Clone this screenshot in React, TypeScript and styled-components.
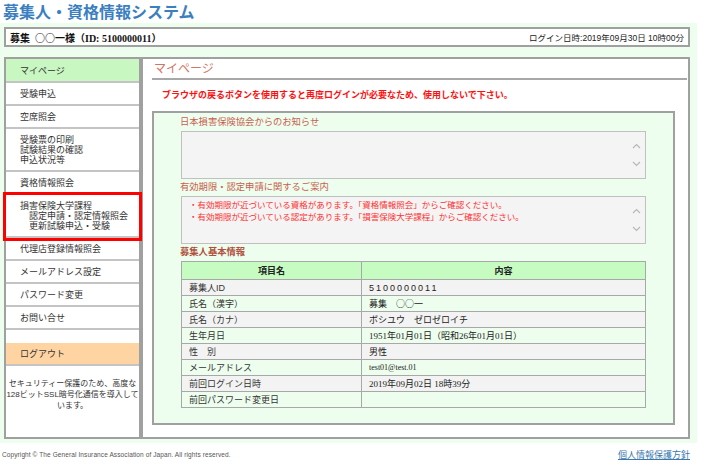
import styled, { createGlobalStyle } from 'styled-components';

const GlobalStyle = createGlobalStyle`
  body {
    margin: 0;
    background: #ffffff;
    font-family: "Liberation Sans", "Noto Sans CJK JP", sans-serif;
    color: #333333;
  }
`;

const MENU_ITEMS: { lines: string[]; active?: boolean; highlighted?: boolean }[] = [
  { lines: ['マイページ'], active: true },
  { lines: ['受験申込'] },
  { lines: ['空席照会'] },
  { lines: ['受験票の印刷', '試験結果の確認', '申込状況等'] },
  { lines: ['資格情報照会'] },
  { lines: ['損害保険大学課程', '\u3000認定申請・認定情報照会', '\u3000更新試験申込・受験'], highlighted: true },
  { lines: ['代理店登録情報照会'] },
  { lines: ['メールアドレス設定'] },
  { lines: ['パスワード変更'] },
  { lines: ['お問い合せ'] },
];

const NOTICES = [
  '・有効期限が近づいている資格があります。「資格情報照会」からご確認ください。',
  '・有効期限が近づいている認定があります。「損害保険大学課程」からご確認ください。',
];

// wide: part of the value drawn in the CJK font (full-width ○)
const PROFILE: { label: string; value: string; wide?: string; spaced?: boolean; small?: boolean }[] = [
  { label: '募集人ID', value: '5100000011', spaced: true },
  { label: '氏名（漢字）', value: '募集\u3000', wide: '○○一' },
  { label: '氏名（カナ）', value: 'ボシユウ\u3000ゼロゼロイチ' },
  { label: '生年月日', value: '1951年01月01日（昭和26年01月01日）' },
  { label: '性\u3000別', value: '男性' },
  { label: 'メールアドレス', value: 'test01@test.01', small: true },
  { label: '前回ログイン日時', value: '2019年09月02日 18時39分' },
  { label: '前回パスワード変更日', value: '' },
];

function ScrollArrows() {
  return (
    <ScrollColumn>
      <svg width="9" height="6" viewBox="0 0 9 6">
        <path d="M1 5 L4.5 1.5 L8 5" fill="none" stroke="#b8b8b8" strokeWidth="1.2" />
      </svg>
      <svg width="9" height="6" viewBox="0 0 9 6">
        <path d="M1 1 L4.5 4.5 L8 1" fill="none" stroke="#b8b8b8" strokeWidth="1.2" />
      </svg>
    </ScrollColumn>
  );
}

function App() {
  return (
    <Page>
      <GlobalStyle />
      <Title>募集人・資格情報システム</Title>
      <HeaderBand>
        <HeaderBox>
          <UserName>
            募集&nbsp;&nbsp;<Wide>○○一</Wide>様（ID: 5100000011）
          </UserName>
          <LoginTime>ログイン日時:2019年09月30日 10時00分</LoginTime>
        </HeaderBox>
      </HeaderBand>
      <MainBand>
        <Sidebar>
          {MENU_ITEMS.map((item) => (
            <MenuItem key={item.lines[0]} $active={item.active} $highlighted={item.highlighted}>
              {item.lines.map((line) => (
                <div key={line}>{line}</div>
              ))}
            </MenuItem>
          ))}
          <LogoutItem>ログアウト</LogoutItem>
          <SecurityNote>
            セキュリティー保護のため、高度な
            <br />
            128ビットSSL暗号化通信を導入して
            <br />
            います。
          </SecurityNote>
        </Sidebar>
        <Content>
          <PageTitle>マイページ</PageTitle>
          <Warning>ブラウザの戻るボタンを使用すると再度ログインが必要なため、使用しないで下さい。</Warning>
          <InfoPanel>
            <SectionLabel>日本損害保険協会からのお知らせ</SectionLabel>
            <MessageBox>
              <MessageText />
              <ScrollArrows />
            </MessageBox>
            <SectionLabel>有効期限・認定申請に関するご案内</SectionLabel>
            <MessageBox>
              <MessageText>
                {NOTICES.map((n) => (
                  <div key={n}>{n}</div>
                ))}
              </MessageText>
              <ScrollArrows />
            </MessageBox>
            <SectionLabel $strong>募集人基本情報</SectionLabel>
            <ProfileTable>
              <thead>
                <tr>
                  <HeadCell>項目名</HeadCell>
                  <HeadCell>内容</HeadCell>
                </tr>
              </thead>
              <tbody>
                {PROFILE.map((row, i) => (
                  <Row key={row.label} $shaded={i % 2 === 0}>
                    <LabelCell>{row.label}</LabelCell>
                    <ValueCell $spaced={row.spaced} $small={row.small}>
                      {row.value}
                      {row.wide && <Wide>{row.wide}</Wide>}
                    </ValueCell>
                  </Row>
                ))}
              </tbody>
            </ProfileTable>
          </InfoPanel>
        </Content>
      </MainBand>
      <Footer>
        <Copyright>Copyright &copy; The General Insurance Association of Japan. All rights reserved.</Copyright>
        <PrivacyLink href="#">個人情報保護方針</PrivacyLink>
      </Footer>
    </Page>
  );
}

export default App;

const Page = styled.div`
  width: 697px;
`;

const Title = styled.div`
  padding-left: 3px;
  font-family: "Noto Sans CJK JP", sans-serif;
  font-size: 16px;
  font-weight: bold;
  line-height: 23px;
  color: #3b7fc1;
`;

const Wide = styled.span`
  font-family: "Noto Sans CJK JP", sans-serif;
`;

const HeaderBand = styled.div`
  background: #eefeee;
  padding: 4px 7px 5px 4px;
`;

const HeaderBox = styled.div`
  height: 16px;
  border: 2px solid #a0a0a0;
  background: #ffffff;
  display: flex;
  align-items: center;
  justify-content: space-between;
  padding: 0 4px 0 4px;
`;

const UserName = styled.div`
  font-family: "Liberation Serif", "Noto Sans CJK JP", serif;
  font-size: 10px;
  font-weight: bold;
  color: #111111;
`;

const LoginTime = styled.div`
  font-size: 8.5px;
  color: #222222;
`;

const MainBand = styled.div`
  background: #eefeee;
  padding: 5px 7px 4px 4px;
  display: flex;
  height: 382px;
`;

const Sidebar = styled.div`
  width: 134px;
  border: 2px solid #a0a0a0;
  background: #ffffff;
  display: flex;
  flex-direction: column;
`;

const MenuItem = styled.div<{ $active?: boolean; $highlighted?: boolean }>`
  padding: ${(p) => (p.$active ? '7px' : '6px')} 0 5px 14px;
  font-size: 9px;
  line-height: 10px;
  color: #333333;
  white-space: nowrap;
  background: ${(p) => (p.$active ? '#c8f7c2' : '#ffffff')};
  border-bottom: 2px solid #c4c4c4;
  outline: ${(p) => (p.$highlighted ? '3px solid #ff0000' : 'none')};
  position: relative;
  z-index: ${(p) => (p.$highlighted ? 1 : 0)};
`;

const LogoutItem = styled.div`
  margin-top: 13px;
  padding: 6px 0 5px 14px;
  font-size: 9px;
  line-height: 10px;
  color: #333333;
  background: #ffd4a3;
  border-bottom: 2px solid #c4c4c4;
`;

const SecurityNote = styled.div`
  margin-top: 12px;
  font-size: 8px;
  line-height: 11px;
  text-align: center;
  white-space: nowrap;
  color: #333333;
`;

const Content = styled.div`
  flex: 1;
  border: 2px solid #a0a0a0;
  background: #ffffff;
  display: flex;
  flex-direction: column;
  padding: 0 0 12px 0;
`;

const PageTitle = styled.div`
  margin: 3px 1px 0 9px;
  padding: 0 0 2px 2px;
  border-bottom: 2px solid #a8a8a8;
  font-size: 12px;
  line-height: 14px;
  color: #d4735f;
`;

const Warning = styled.div`
  margin-top: 9px;
  padding-left: 19px;
  font-size: 9px;
  line-height: 12px;
  font-weight: bold;
  color: #ff1010;
`;

const InfoPanel = styled.div`
  flex: 1;
  margin: 10px 13px 0 9px;
  border: 2px solid #a0a0a0;
  background: #eefeee;
  padding: 1px 27px 0 26px;
`;

const SectionLabel = styled.div<{ $strong?: boolean }>`
  padding: 2px 0 3px;
  font-size: 9.3px;
  line-height: 12px;
  color: ${(p) => (p.$strong ? '#b0503e' : '#c8604e')};
  font-weight: ${(p) => (p.$strong ? 'bold' : 'normal')};
`;

const MessageBox = styled.div`
  height: 46px;
  margin-left: 1px;
  border: 1px solid #c0c0c0;
  background: #f4f4f4;
  display: flex;
`;

const MessageText = styled.div`
  flex: 1;
  padding: 2px 0 0 7px;
  font-size: 8.5px;
  line-height: 12px;
  color: #ff3030;
  white-space: nowrap;
`;

const ScrollColumn = styled.div`
  width: 18px;
  display: flex;
  flex-direction: column;
  align-items: center;
  justify-content: center;
  gap: 12px;
`;

const ProfileTable = styled.table`
  width: 465px;
  margin-left: 1px;
  border-collapse: collapse;
  font-size: 9px;
`;

const HeadCell = styled.th`
  height: 17px;
  padding: 0;
  border: 1px solid #a8a8a8;
  background: #c6fcc2;
  font-weight: bold;
  color: #222222;
  text-align: center;
  &:first-child {
    width: 179px;
  }
`;

const Row = styled.tr<{ $shaded: boolean }>`
  background: ${(p) => (p.$shaded ? '#f3f3f3' : '#eefeee')};
`;

const LabelCell = styled.td`
  height: 15px;
  padding: 0 0 0 7px;
  border: 1px solid #a8a8a8;
  color: #333333;
  white-space: nowrap;
`;

const ValueCell = styled.td<{ $spaced?: boolean; $small?: boolean }>`
  height: 15px;
  padding: 0 0 0 7px;
  border: 1px solid #a8a8a8;
  font-family: ${(p) =>
    p.$spaced ? '"Liberation Sans", sans-serif' : '"Liberation Serif", "Noto Sans CJK JP", serif'};
  font-size: ${(p) => (p.$small ? '8px' : '9px')};
  letter-spacing: ${(p) => (p.$spaced ? '2px' : '0')};
  color: #222222;
  white-space: nowrap;
`;

const Footer = styled.div`
  height: 23px;
  display: flex;
  align-items: center;
  justify-content: space-between;
  padding: 0 7px 0 2px;
`;

const Copyright = styled.div`
  font-size: 6.5px;
  color: #555555;
  letter-spacing: 0.1px;
`;

const PrivacyLink = styled.a`
  font-family: "Noto Sans CJK JP", sans-serif;
  font-size: 9px;
  color: #3a78b0;
  text-decoration: underline;
`;
